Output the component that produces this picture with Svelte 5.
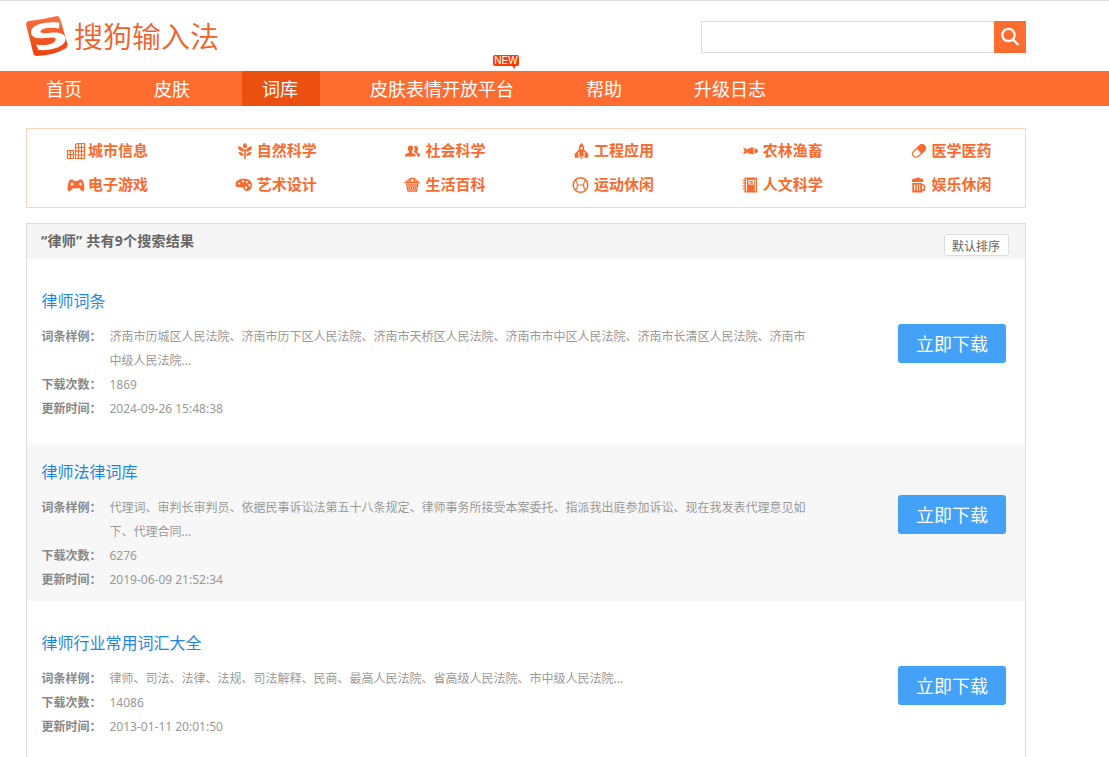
<script>
  const menus = [
    { name: "首页" },
    { name: "皮肤" },
    { name: "词库", active: true },
    { name: "皮肤表情开放平台", fresh: true },
    { name: "帮助" },
    { name: "升级日志" },
  ];

  const categories = [
    { name: "城市信息", icon: "city" },
    { name: "自然科学", icon: "leaf" },
    { name: "社会科学", icon: "people" },
    { name: "工程应用", icon: "rocket" },
    { name: "农林渔畜", icon: "fish" },
    { name: "医学医药", icon: "pill" },
    { name: "电子游戏", icon: "game" },
    { name: "艺术设计", icon: "palette" },
    { name: "生活百科", icon: "basket" },
    { name: "运动休闲", icon: "ball" },
    { name: "人文科学", icon: "book" },
    { name: "娱乐休闲", icon: "beer" },
  ];

  const results = [
    {
      title: "律师词条",
      sample:
        "济南市历城区人民法院、济南市历下区人民法院、济南市天桥区人民法院、济南市市中区人民法院、济南市长清区人民法院、济南市中级人民法院...",
      count: 1869,
      time: "2024-09-26 15:48:38",
    },
    {
      title: "律师法律词库",
      sample:
        "代理词、审判长审判员、依据民事诉讼法第五十八条规定、律师事务所接受本案委托、指派我出庭参加诉讼、现在我发表代理意见如下、代理合同...",
      count: 6276,
      time: "2019-06-09 21:52:34",
    },
    {
      title: "律师行业常用词汇大全",
      sample:
        "律师、司法、法律、法规、司法解释、民商、最高人民法院、省高级人民法院、市中级人民法院...",
      count: 14086,
      time: "2013-01-11 20:01:50",
    },
  ];

  let keyword = $state("");
</script>

<div class="page">
  <header>
    <a class="logo" href="/">
      <svg width="42" height="42" viewBox="0 0 42 42">
        <defs>
          <linearGradient id="logo-bg" x1="0" y1="0" x2="0" y2="1">
            <stop offset="0" stop-color="#fb7040" />
            <stop offset="1" stop-color="#ec420b" />
          </linearGradient>
        </defs>
        <path
          d="M3 6Q17 4.500 30 1.200Q33 .6 34 3.500L41.500 29Q42 32 39.500 33.500Q27 40.500 11 41Q8 41 7.200 38L.2 10Q-.3 6.500 3 6Z"
          fill="url(#logo-bg)"
        />
        <path
          d="M33.500 7.500C17 6 5 10 5 17C5 24.500 16 23.500 23 22.800C30 22 30.500 24 29 26C26.500 29.500 19 31 10 29.500L12.500 35C25 36 38 32 39.500 25C40.500 18.500 33 17 25 17.800C18 18.500 14 18.500 14.500 16.300C15.500 13 25 11.800 33 13.500Z"
          fill="#fff"
        />
      </svg>
      <span>搜狗输入法</span>
    </a>
    <form class="search">
      <input type="text" aria-label="搜索" bind:value={keyword} />
      <button type="button" aria-label="搜索">
        <svg width="20" height="20" viewBox="0 0 20 20">
          <circle cx="8.500" cy="8" r="6.200" />
          <path d="M13 12.500l5.500 5.500" />
        </svg>
      </button>
    </form>
  </header>

  <nav>
    {#each menus as menu}
      <a href="/" class:active={menu.active}>
        {menu.name}
        {#if menu.fresh}<i class="new">NEW</i>{/if}
      </a>
    {/each}
  </nav>

  <main>
    <div class="categories">
      {#each categories as category}
        <a href="/">
          <svg width="20" height="18" viewBox="0 0 20 18">
            {#if category.icon === "city"}
              <path class="line" d="M1.500 8.500h6v8h-6zM1.500 12.500h6M4.500 8.500v8M9.500 2.500l2-1h7v15h-9zM9.500 5.500h9M9.500 9.200h9M9.500 13h9M12.500 2v14.500M15.500 2v14.500" />
            {:else if category.icon === "leaf"}
              <path d="M10 1c-3 2-2.500 4.500 0 6c2.500-1.500 3-4 0-6zM3 4.500c0 3.500 2.500 5 6 5c0-3-2.500-5-6-5zM17 4.500c0 3.500-2.500 5-6 5c0-3 2.500-5 6-5zM3.500 10c.5 3.500 3 4 5.500 3.500c-.5-2.500-2.500-3.700-5.500-3.500zM16.500 10c-.5 3.500-3 4-5.500 3.500c.5-2.500 2.500-3.700 5.500-3.500zM9.200 6h1.600v11H9.200z" />
            {:else if category.icon === "people"}
              <path d="M7.500 3.500c3 0 3.300 3.600 1.300 5.700v1.300l3.700 2v2H2v-2l4-2V9.200C4 7 4.500 3.500 7.500 3.500zM11 4.300c4-1.500 5.300 2 3.300 4.700v1.500l2.700 1.500v2.500h-3v-2.300l-3.300-2.200c1.500-2 1.500-4 .3-5.700z" />
            {:else if category.icon === "rocket"}
              <path fill-rule="evenodd" d="M9.500 1c2.200 2 2.800 4 2.800 7l4 3.700v4h-3.600l-1.200-1.200h-4l-1.200 1.200H2.700v-4l4-3.700c0-3 .6-5 2.800-7zM9.500 5a1.200 1.200 0 1 0 .01 0zM7.800 15.300h3.400l-1.700 2z" />
              <path class="cut" d="M6.800 10v4.500M12.200 10v4.500" />
            {:else if category.icon === "fish"}
              <path d="M2 5.500l4.500 1.900c3.500-2.800 8-2.500 11 1.600c-3 4.100-8 4.100-11 1.600l-4.500 1.900l1.500-3.500z" />
              <path class="cut" d="M13.500 5.500q-1.500 3.500 0 7" />
            {:else if category.icon === "pill"}
              <g transform="rotate(-43 10 9)">
                <rect class="line" x="2.500" y="5.600" width="15" height="6.800" rx="3.400" />
                <path d="M10 5.200h4.300a3.800 3.800 0 0 1 0 7.600H10z" />
              </g>
            {:else if category.icon === "game"}
              <path d="M4 3.500h3L8 5h4l1-1.500h3c1.800 2 2.700 7 2.200 10.500c-1 2-2.700 1.500-4.700-1.800h-7C4.500 15.500 2.500 16 1.800 14C1.300 10.500 2.200 5.500 4 3.500z" />
              <path class="cut" d="M6 6v4M4 8h4M12.500 8h3.600M14.300 6.200v3.600" />
            {:else if category.icon === "palette"}
              <path fill-rule="evenodd" d="M9 2.800c5 0 8 2.700 8 5.900s-2 6.300-5.500 6.300c-2.500 0-2-2.500-4-3.400C5.500 10.900.5 12.200.5 8.500S4.500 2.800 9 2.800zM4 6.500a1.200 1 0 1 0 .01 0zM8 4.300a1.200 1 0 1 0 .01 0zM12 5a1.200 1 0 1 0 .01 0zM14.500 8a1.200 1.200 0 1 0 .01 0zM11 10.300a1.300 1.300 0 1 0 .01 0z" />
            {:else if category.icon === "basket"}
              <path d="M1.500 5.500h15v1.900h-15zM3 8.300h12.500l-1.500 7.500H4.500z" />
              <path class="line" d="M3.500 5.500l4-3.200h3.500l4 3.200M6 5.500l2.300-2M12.500 5.500l-2.300-2" />
              <path class="cut dots" d="M4.500 10h10M5 12h9M5.500 14h8" />
            {:else if category.icon === "ball"}
              <g class="line">
                <circle cx="8.500" cy="9" r="7.300" stroke-width="1.500" />
                <path d="M3.500 3.800q4 5.200 0 10.400M13.500 3.800q-4 5.200 0 10.400M5.500 9h6" />
              </g>
            {:else if category.icon === "book"}
              <path fill-rule="evenodd" d="M3.500 1.500h12.500v15H3.500zM5 2.800v12.400h1V2.800zM7.500 4h5.500v4.500H7.500z" />
              <path class="line" d="M1.500 4h3M1.500 7h3M1.500 10h3M1.500 13h3M8.500 5.500h3.500M8.500 7.200h3.500" />
              <path class="cut" d="M14.300 2.800v12.400" />
            {:else}
              <path fill-rule="evenodd" d="M3 6C2 3 4.500 2 6.500 2.500C8 1 11 1 11.500 2.500c2.500 0 3.500 1.500 2.500 3.500zM3.300 7h9.700v1c2.500 0 3.300 1 3.300 3.700s-.8 3.500-3.300 3.500v1.300H3.300zM13 9.500v4c1.500 0 1.800-.3 1.800-1.900S14.500 9.500 13 9.500z" />
              <path class="cut" d="M5.700 8.500v6M8.200 8.500v6M10.700 8.500v6" />
            {/if}
          </svg>
          <span>{category.name}</span>
        </a>
      {/each}
    </div>

    <section class="results">
      <div class="results-head">
        <h1>“律师” 共有9个搜索结果</h1>
        <button>默认排序</button>
      </div>
      <div class="list">
        {#each results as result, i}
          <article class:even={i % 2 === 1}>
            <div class="info">
              <h2><a href="/">{result.title}</a></h2>
              <dl>
                <dt>词条样例：</dt>
                <dd>{result.sample}</dd>
                <dt>下载次数：</dt>
                <dd>{result.count}</dd>
                <dt>更新时间：</dt>
                <dd>{result.time}</dd>
              </dl>
            </div>
            <a class="download" href="/">立即下载</a>
          </article>
        {/each}
      </div>
    </section>
  </main>
</div>

<style>
  :global(body) {
    overflow: hidden;
  }

  .page {
    box-sizing: border-box;
    height: 757px;
    overflow: hidden;
    border-top: 1px solid #ddd;
    background: #fff;
    font-family: "Noto Sans", "Noto Sans CJK SC", sans-serif;
    font-size: 12px;
    color: #999;
  }

  a {
    color: inherit;
    text-decoration: none;
  }

  header {
    display: flex;
    justify-content: space-between;
    box-sizing: border-box;
    width: 1026px;
    height: 70px;
    padding: 14px 0 0 26px;
  }

  .logo {
    display: flex;
    height: 42px;
    gap: 6px;
    color: #f2602a;
  }

  .logo span {
    font-family: "Noto Sans CJK SC", sans-serif;
    font-size: 29px;
    font-weight: 350;
    line-height: 40px;
  }

  .search {
    display: flex;
    height: 32px;
    margin-top: 6px;
  }

  .search input {
    box-sizing: border-box;
    width: 293px;
    height: 32px;
    padding: 0 8px;
    border: 1px solid #ddd;
    border-right: none;
    border-radius: 0;
    outline: none;
  }

  .search button {
    display: flex;
    align-items: center;
    justify-content: center;
    width: 32px;
    height: 32px;
    padding: 0;
    border: none;
    background: #ff6c2f;
  }

  .search svg {
    fill: none;
    stroke: #fff;
    stroke-width: 2.2;
  }

  nav {
    display: flex;
    gap: 30px;
    height: 35px;
    padding-left: 26px;
    background: #ff6c2f;
  }

  nav a {
    position: relative;
    padding: 0 22px 0 20px;
    font-size: 18px;
    line-height: 36px;
    height: 35px;
    color: #fff;
    white-space: nowrap;
  }

  nav a.active {
    background: #ec5010;
  }

  .new {
    position: absolute;
    top: -16px;
    right: 17px;
    width: 26px;
    height: 11px;
    border-radius: 2px;
    background: #fa3c08;
    font: 10px/12px "Liberation Sans", sans-serif;
    text-align: center;
  }

  .new::after {
    content: "";
    position: absolute;
    top: 11px;
    right: 4px;
    border-top: 3px solid #fa3c08;
    border-left: 3px solid transparent;
  }

  main {
    width: 1000px;
    margin: 22px 0 0 26px;
  }

  .categories {
    display: grid;
    grid-template-columns: repeat(6, 168.700px);
    grid-auto-rows: 34px;
    box-sizing: border-box;
    height: 80px;
    padding: 5px 0 0 39px;
    border: 1px solid #fbd3bf;
    overflow: hidden;
  }

  .categories a {
    display: flex;
    align-items: center;
    gap: 2px;
    font-size: 15px;
    font-weight: bold;
    color: #f96a2e;
  }

  .categories span {
    line-height: 22px;
    padding-bottom: 2px;
  }

  .categories svg {
    fill: #f96a2e;
  }

  .categories .line {
    fill: none;
    stroke: #f96a2e;
    stroke-width: 1.200;
  }

  .categories .cut {
    fill: none;
    stroke: #fff;
    stroke-width: 1;
  }

  .categories .dots {
    stroke-dasharray: 1 1;
  }

  .results {
    margin-top: 15px;
    border: 1px solid #ddd;
  }

  .results-head {
    display: flex;
    justify-content: space-between;
    height: 35px;
    padding: 0 16px 0 14px;
    background: #f5f5f5;
  }

  h1 {
    margin: 0;
    font-size: 14px;
    line-height: 34px;
    letter-spacing: 0.25px;
    color: #666;
  }

  .results-head button {
    box-sizing: border-box;
    width: 65px;
    height: 22px;
    margin-top: 10px;
    padding: 2px 1px 0 0;
    border: 1px solid #ddd;
    border-radius: 3px;
    background: #fff;
    font-family: inherit;
    font-size: 12px;
    line-height: 20px;
    color: #666;
  }

  .list {
    display: flex;
    flex-direction: column;
    gap: 15px;
    padding-top: 15px;
  }

  article {
    display: flex;
    justify-content: space-between;
    box-sizing: border-box;
    height: 156px;
    padding: 15px 19px 0 14.500px;
  }

  article.even {
    background: #f7f7f7;
  }

  h2 {
    margin: 0 0 12px;
    font-size: 16px;
    font-weight: normal;
    line-height: 24px;
    color: #1e87e5;
  }

  dl {
    display: grid;
    grid-template-columns: 68px 700px;
    margin: 0;
    line-height: 24px;
  }

  dt {
    font-weight: bold;
    color: #888;
  }

  dd {
    margin: 0;
    word-break: break-all;
  }

  .download {
    width: 108px;
    height: 39px;
    margin-top: 35px;
    border-radius: 3px;
    background: #43a1f8;
    font-size: 18px;
    line-height: 40px;
    text-align: center;
    color: #fff;
  }
</style>
